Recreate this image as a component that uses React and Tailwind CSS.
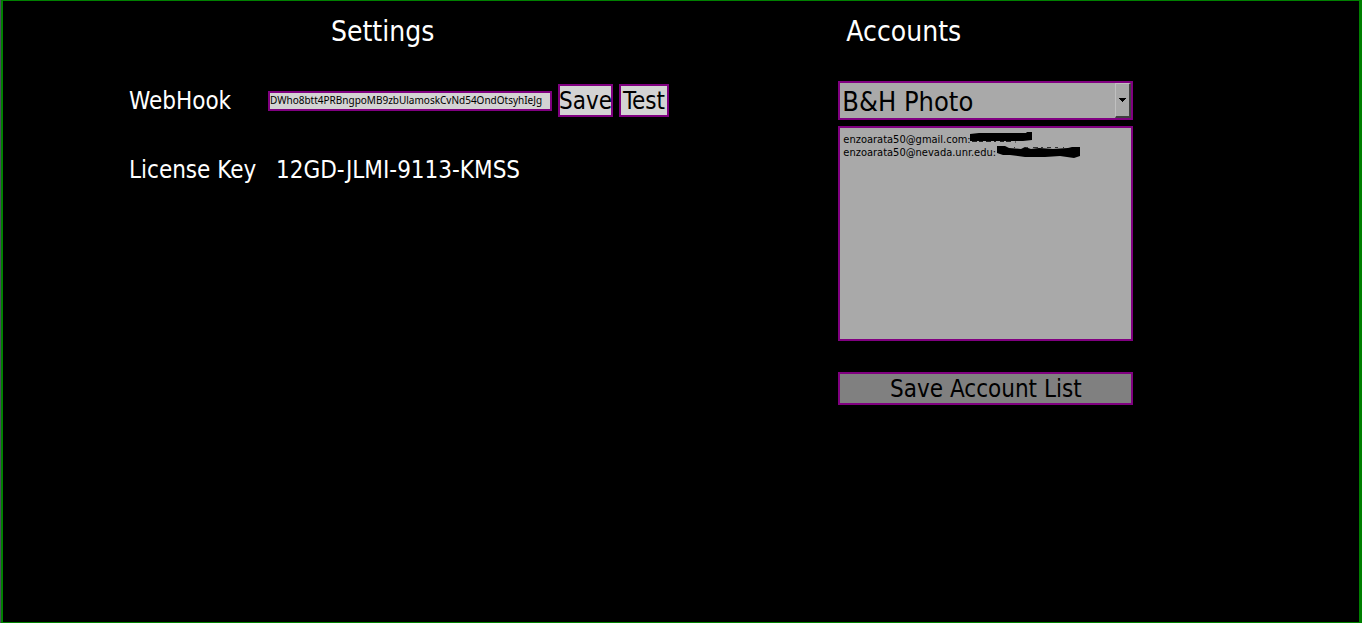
import { useState } from "react";

const RETAILERS = ["B&H Photo"];

function SettingsPanel() {
  const [webhook, setWebhook] = useState("DWho8btt4PRBngpoMB9zbUlamoskCvNd54OndOtsyhIeJg");
  return (
    <section className="w-[56%] shrink-0">
      <h1 className="text-center text-[28px] leading-[34px]">Settings</h1>
      <div className="mt-[35px] flex items-center pl-[126px] text-2xl leading-[29px]">
        <label htmlFor="webhook" className="w-[139px] pt-0.5">WebHook</label>
        <input
          id="webhook"
          type="text"
          value={webhook}
          onChange={(e) => setWebhook(e.target.value)}
          className="h-5 w-[284px] border-2 border-[#800080] bg-[#d3d3d3] font-['Noto_Sans',sans-serif] text-[10px] text-black outline-none"
        />
        <button type="button" className="ml-1.5 flex h-[33px] w-[55px] justify-center whitespace-nowrap border-2 border-[#800080] bg-[#d3d3d3] pt-px text-black">
          Save
        </button>
        <button type="button" className="ml-1.5 flex h-[33px] w-[50px] justify-center whitespace-nowrap border-2 border-[#800080] bg-[#d3d3d3] pt-px text-black">
          Test
        </button>
      </div>
      <dl className="mt-[37px] flex items-center pl-[126px] text-2xl leading-[33px]">
        <dt className="w-[147px]">License Key</dt>
        <dd>12GD-JLMI-9113-KMSS</dd>
      </dl>
    </section>
  );
}

function AccountsPanel() {
  const [accounts, setAccounts] = useState("enzoarata50@gmail.com:\nenzoarata50@nevada.unr.edu:");
  return (
    <section className="ml-[76px] w-[295px]">
      <h1 className="pl-2 text-[28px] leading-[34px]">Accounts</h1>
      <div className="relative mt-8">
        <select
          aria-label="Retailer"
          className="block h-[39px] w-full appearance-none border-2 border-[#800080] bg-[#a9a9a9] pl-0.5 pt-0.5 text-[27px] leading-[33px] text-black outline-none"
        >
          {RETAILERS.map((name) => (
            <option key={name}>{name}</option>
          ))}
        </select>
        <span className="pointer-events-none absolute bottom-0.5 right-0.5 top-0.5 flex w-4 items-center justify-center border border-b-2 border-r-2 border-[#c0c0c0] border-b-[#404040] border-r-[#404040] bg-[#a9a9a9]">
          <svg width="7" height="4" viewBox="0 0 7 4" shapeRendering="crispEdges" aria-hidden="true">
            <path d="M0 0h7v1H6v1H5v1H4v1H3V3H2V2H1V1H0z" fill="#000" />
          </svg>
        </span>
      </div>
      <div className="relative mt-1.5">
        <textarea
          aria-label="Account list"
          value={accounts}
          onChange={(e) => setAccounts(e.target.value)}
          className="block h-[215px] w-full resize-none border-2 border-[#800080] bg-[#a9a9a9] px-[3px] py-[5px] text-[11px] leading-[13px] text-black outline-none"
        />
        <svg className="pointer-events-none absolute left-[127px] top-1" width="116" height="30" viewBox="0 0 116 30" aria-hidden="true">
          <path d="M5 4L14 3L40 3L61 3L62 2L67 2L67 10L58 11L40 11L20 11L5 11Z" fill="#000" />
          <path d="M7 11.5h5M14 11.5h4M21 11.5h5M29 11.5h2M35 11.5h4M41 11.5h5M50 12h1" stroke="#222" strokeWidth="1" />
          <path d="M32 16L40 16L44 18L56 19L60 17L66 19L74 18L88 19L103 18L107 17L115 17L115 26L109 28L95 26L80 27L60 27L45 25L38 25L32 23Z" fill="#000" />
          <path d="M49 17.5h1M61 17.5h2M68 17.5h5M76 17.5h2M82 17.5h4M90 17.5h3M98 17.5h1" stroke="#333" strokeWidth="1" />
        </svg>
      </div>
      <button type="button" className="mt-[31px] flex h-[33px] w-full justify-center border-2 border-[#800080] bg-[#808080] pt-px text-2xl leading-[29px] text-black">
        Save Account List
      </button>
    </section>
  );
}

export default function App() {
  return (
    <div className="min-h-screen border-l border-[#4b4b5f] bg-black">
      <main className="flex min-h-screen border-b border-l-2 border-r-[3px] border-t border-[#008000] pt-3.5 font-['DejaVu_Sans_Condensed','Noto_Sans',sans-serif] text-white">
        <SettingsPanel />
        <AccountsPanel />
      </main>
    </div>
  );
}
